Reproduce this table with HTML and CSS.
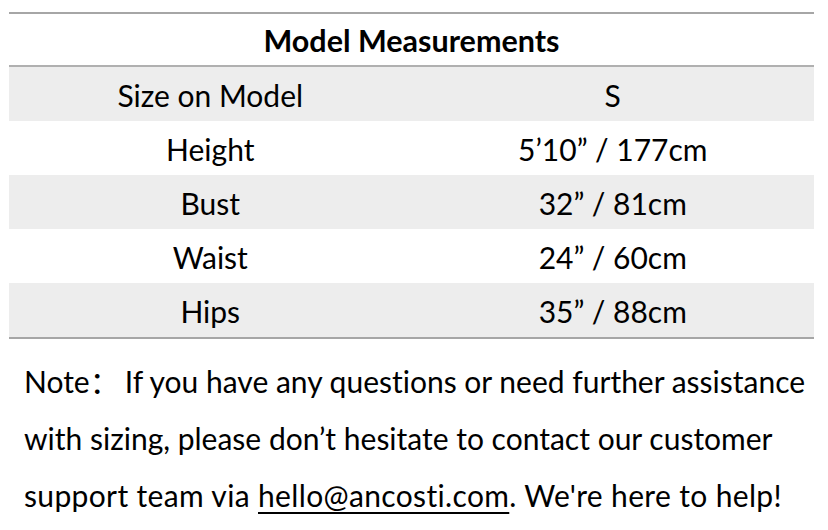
FILE: index.html
```html
<!DOCTYPE html>
<html>
<head>
<meta charset="utf-8">
<link rel="stylesheet" href="styles.css">
</head>
<body>
<div class="page">
  <table class="measure">
    <thead>
      <tr><th colspan="2" class="title">Model Measurements</th></tr>
    </thead>
    <tbody>
      <tr class="shade"><td>Size on Model</td><td>S</td></tr>
      <tr><td>Height</td><td>5’10” / 177cm</td></tr>
      <tr class="shade"><td>Bust</td><td>32” / 81cm</td></tr>
      <tr><td>Waist</td><td>24” / 60cm</td></tr>
      <tr class="shade"><td>Hips</td><td>35” / 88cm</td></tr>
    </tbody>
  </table>
  <p class="note"><span class="line">Note<span class="colon">：</span>If you have any questions or need further assistance</span><span class="line">with sizing, please don’t hesitate to contact our customer</span><span class="line last">support team via <a class="mail" href="#">hello@ancosti.com</a>. We're here to help!</span></p>
</div>
</body>
</html>
```
FILE: styles.css
```css
html, body {
  margin: 0;
  padding: 0;
  background: #ffffff;
}
body {
  font-family: Lato, "Noto Sans", "Noto Sans CJK SC", sans-serif;
  color: #000;
}
.page {
  padding: 12px 14px 0 9px;
}
.measure {
  width: 805px;
  border-collapse: collapse;
  border-top: 2px solid #a6a6a6;
  border-bottom: 2px solid #a6a6a6;
  font-size: 30px;
}
.measure th.title {
  height: 51px;
  padding: 0;
  font-weight: 700;
  font-size: 30.5px;
  text-align: center;
  border-bottom: 2px solid #b0b0b0;
}
.measure td {
  width: 50%;
  height: 52px;
  padding: 2px 0 0;
  text-align: center;
}
.measure tr.shade td {
  background: #ededed;
}
.note {
  margin: 0;
  padding: 13px 0 0 15px;
  font-size: 30px;
  line-height: 57px;
  font-variant-ligatures: none;
}
.line {
  display: block;
  white-space: nowrap;
}
.line.last {
  letter-spacing: 0.35px;
}
.colon {
  font-family: "Noto Sans CJK SC", sans-serif;
  margin-right: 5px;
}
.mail {
  color: #000;
  text-decoration: underline;
  text-decoration-thickness: 2px;
  text-underline-offset: 5px;
}
```
